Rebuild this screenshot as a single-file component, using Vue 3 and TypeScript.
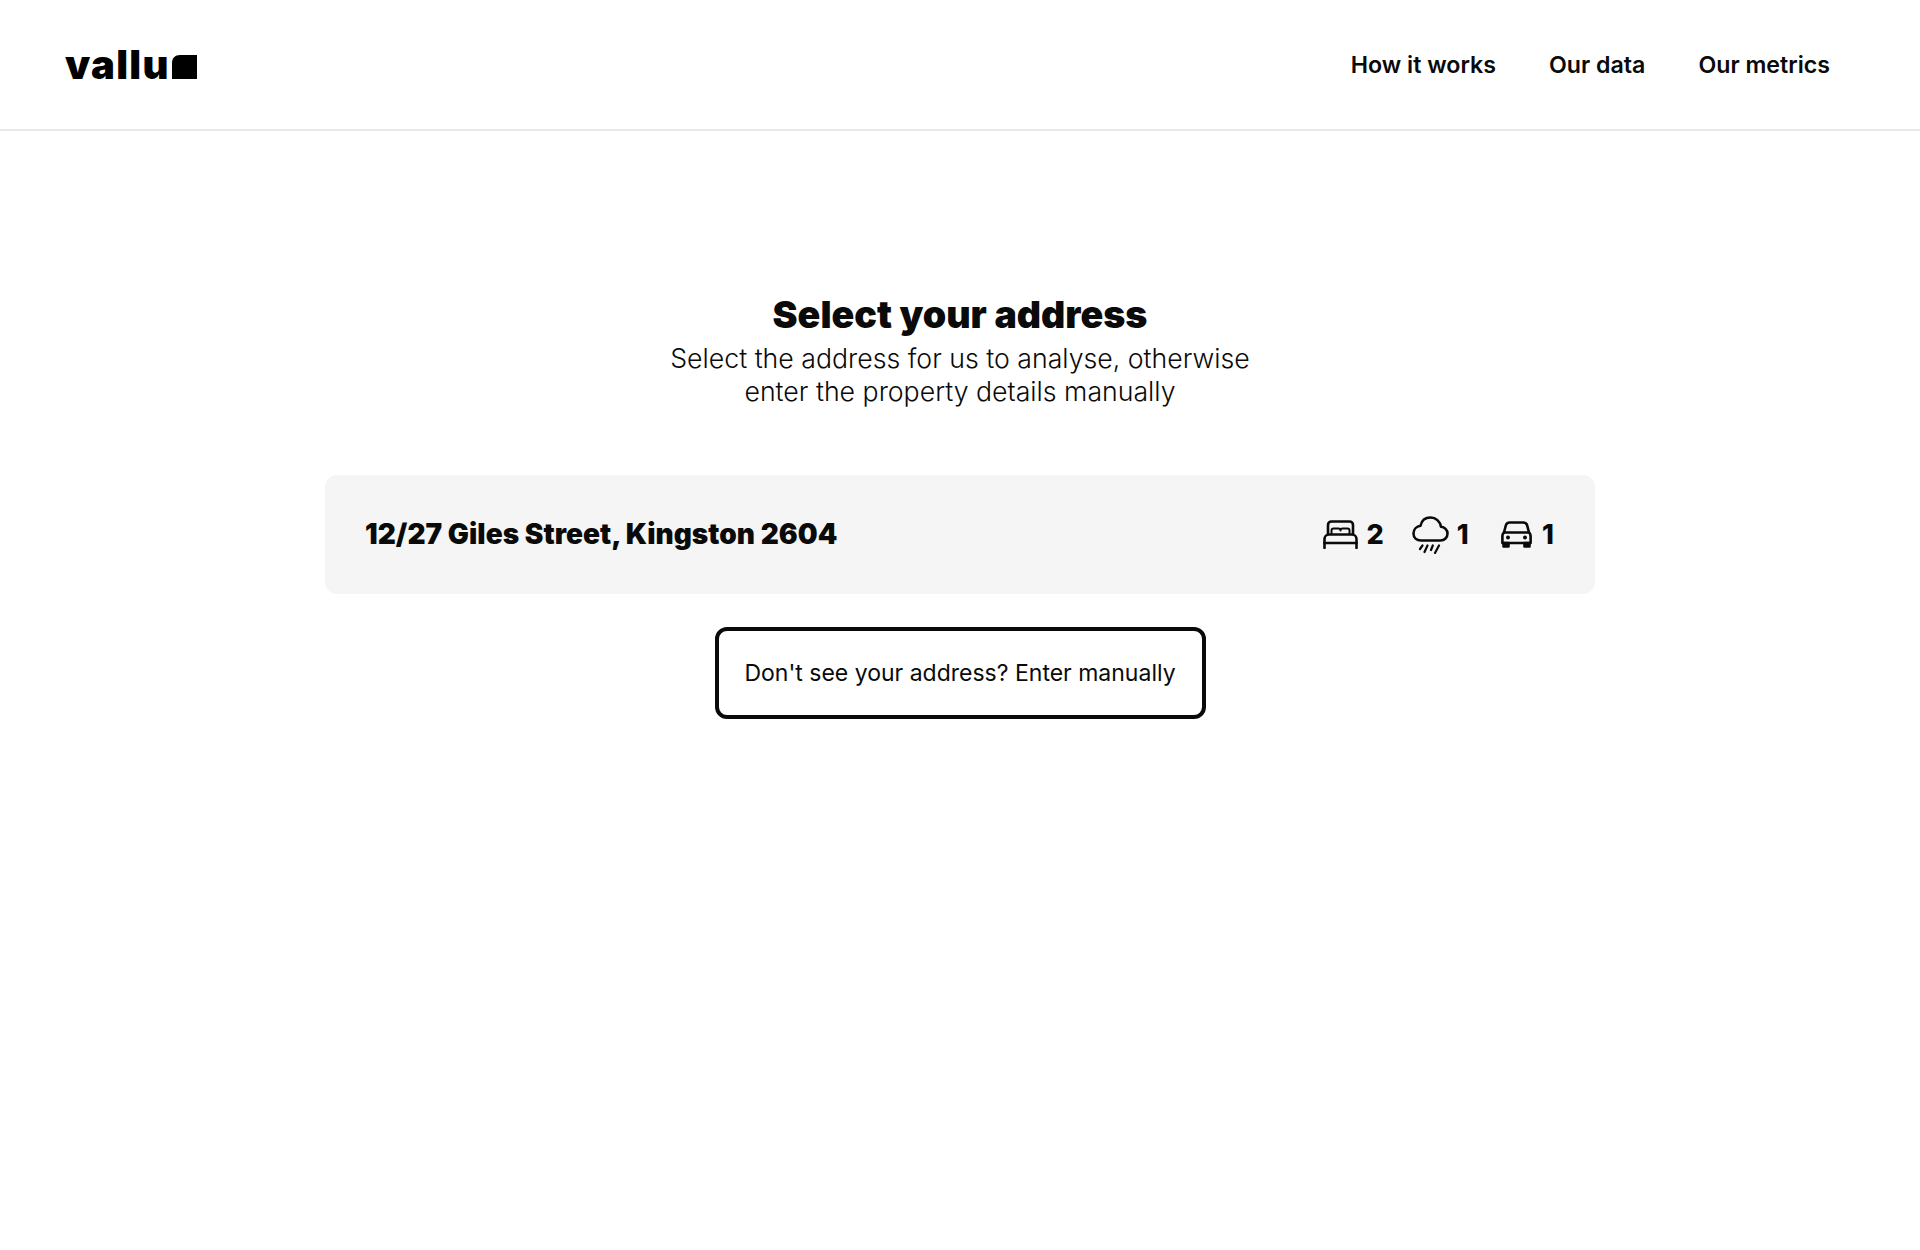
<script setup lang="ts">
const nav: string[] = ['How it works', 'Our data', 'Our metrics']
</script>

<template>
  <div class="page">
    <header class="top">
      <div class="logo">
        <span>vallu</span>
        <svg class="mark" width="25" height="24" viewBox="0 0 25 24"><path d="M0 8 C0 3 3 0 8 0 H25 V24 H0 Z" fill="#000" /></svg>
      </div>
      <nav class="nav"><a v-for="n in nav" :key="n">{{ n }}</a></nav>
    </header>
    <main class="main">
      <h1>Select your address</h1>
      <p class="sub">Select the address for us to analyse, otherwise<br />enter the property details manually</p>
      <div class="card">
        <div class="addr">12/27 Giles Street, Kingston 2604</div>
        <div class="feats">
          <div class="feat">
            <svg width="35" height="29" viewBox="0 0 35 29" fill="none" stroke="#0a0a0a" stroke-width="2.6" stroke-linecap="round" stroke-linejoin="round">
              <path d="M1.500 28V19C1.500 16.500 3.500 14.500 6 14.500H29C31.500 14.500 33.500 16.500 33.500 19V28" />
              <path d="M1.500 23H33.500" />
              <path d="M5 14V5C5 3 6.500 1.500 8.500 1.500H26.500C28.500 1.500 30 3 30 5V14" />
              <path d="M8.500 14V10.500C8.500 9.200 9.300 8.500 10.500 8.500H15.500C16.800 8.500 17.500 9.200 17.500 10.500C17.500 9.200 18.200 8.500 19.500 8.500H24.500C25.700 8.500 26.500 9.200 26.500 10.500V14" stroke-width="2" />
            </svg>
            <span>2</span>
          </div>
          <div class="feat f2">
            <svg width="37" height="38" viewBox="0 0 37 38" fill="none" stroke="#0a0a0a" stroke-width="2.6" stroke-linecap="round" stroke-linejoin="round">
              <path d="M9 24.500H28.500C32.500 24.500 35.500 21.500 35.500 17.500C35.500 13.800 32.500 11 29 10.800C28 5.500 24 1.500 18.500 1.500C13 1.500 9.500 5 8.500 9.800C4.500 10.300 1.500 13.500 1.500 17.500C1.500 21.500 4.500 24.500 9 24.500Z" />
              <path d="M8 33L10.500 29.500M12.500 36L15.500 29.500M19 34L20.800 29.500M23 37L27 29.500" stroke-width="2.2" />
            </svg>
            <span>1</span>
          </div>
          <div class="feat f3">
            <svg width="31" height="27" viewBox="0 0 31 27" fill="none" stroke="#0a0a0a" stroke-width="2.6" stroke-linecap="round" stroke-linejoin="round">
              <path d="M3 11.500L4.800 4.500C5.300 2.500 6.800 1.500 8.800 1.500H22.200C24.200 1.500 25.700 2.500 26.200 4.500L28 11.500" />
              <path d="M3 11.500H28C29.200 12.500 29.600 13.500 29.600 15V22H1.400V15C1.400 13.500 1.800 12.500 3 11.500Z" />
              <path d="M2.500 22H7.500V25.500H2.500ZM23.500 22H28.500V25.500H23.500Z" fill="#0a0a0a" />
              <circle cx="7" cy="16.500" r="2" fill="#0a0a0a" stroke="none" />
              <circle cx="24" cy="16.500" r="2" fill="#0a0a0a" stroke="none" />
            </svg>
            <span>1</span>
          </div>
        </div>
      </div>
      <button class="manual" type="button">Don't see your address? Enter manually</button>
    </main>
  </div>
</template>

<style scoped>
.page { min-height: 1250px; background: #fff; color: #0a0a0a; font-family: Inter, "Liberation Sans", sans-serif; }
.top { height: 129px; border-bottom: 2px solid #e8e8e8; display: flex; align-items: center; justify-content: space-between; padding: 0 90px 0 65px; }
.logo { display: flex; align-items: flex-end; font-weight: 900; font-size: 40px; line-height: 40px; color: #000; letter-spacing: 1.3px; }
.mark { margin: 0 0 6px 2px; }
.nav { display: flex; gap: 53px; font-size: 23.2px; font-weight: 600; }
.main { display: flex; flex-direction: column; align-items: center; padding-top: 159px; }
h1 { margin: 0 0 3px; font-size: 37.6px; line-height: 50px; font-weight: 900; }
.sub { margin: -1px 0 1px; font-size: 26.7px; line-height: 33px; font-weight: 300; text-align: center; }
.card { margin-top: 66px; width: 1270px; height: 119px; box-sizing: border-box; padding: 0 41px 0 40px; background: #f5f5f5; border-radius: 12px; display: flex; align-items: center; justify-content: space-between; }
.addr { font-size: 28px; font-weight: 900; margin-bottom: 2px; letter-spacing: 0.04px; }
.feats { display: flex; align-items: center; font-size: 27px; font-weight: 800; }
.feat { display: flex; align-items: center; gap: 8px; }
.f2 { margin-left: 28px; }
.f3 { margin-left: 32px; gap: 10.5px; }
.manual { margin-top: 33px; width: 491px; height: 92px; background: #fff; border: 4px solid #0a0a0a; border-radius: 12px; color: #0a0a0a; font: 400 23px Inter, "Liberation Sans", sans-serif; padding: 0; }
</style>
